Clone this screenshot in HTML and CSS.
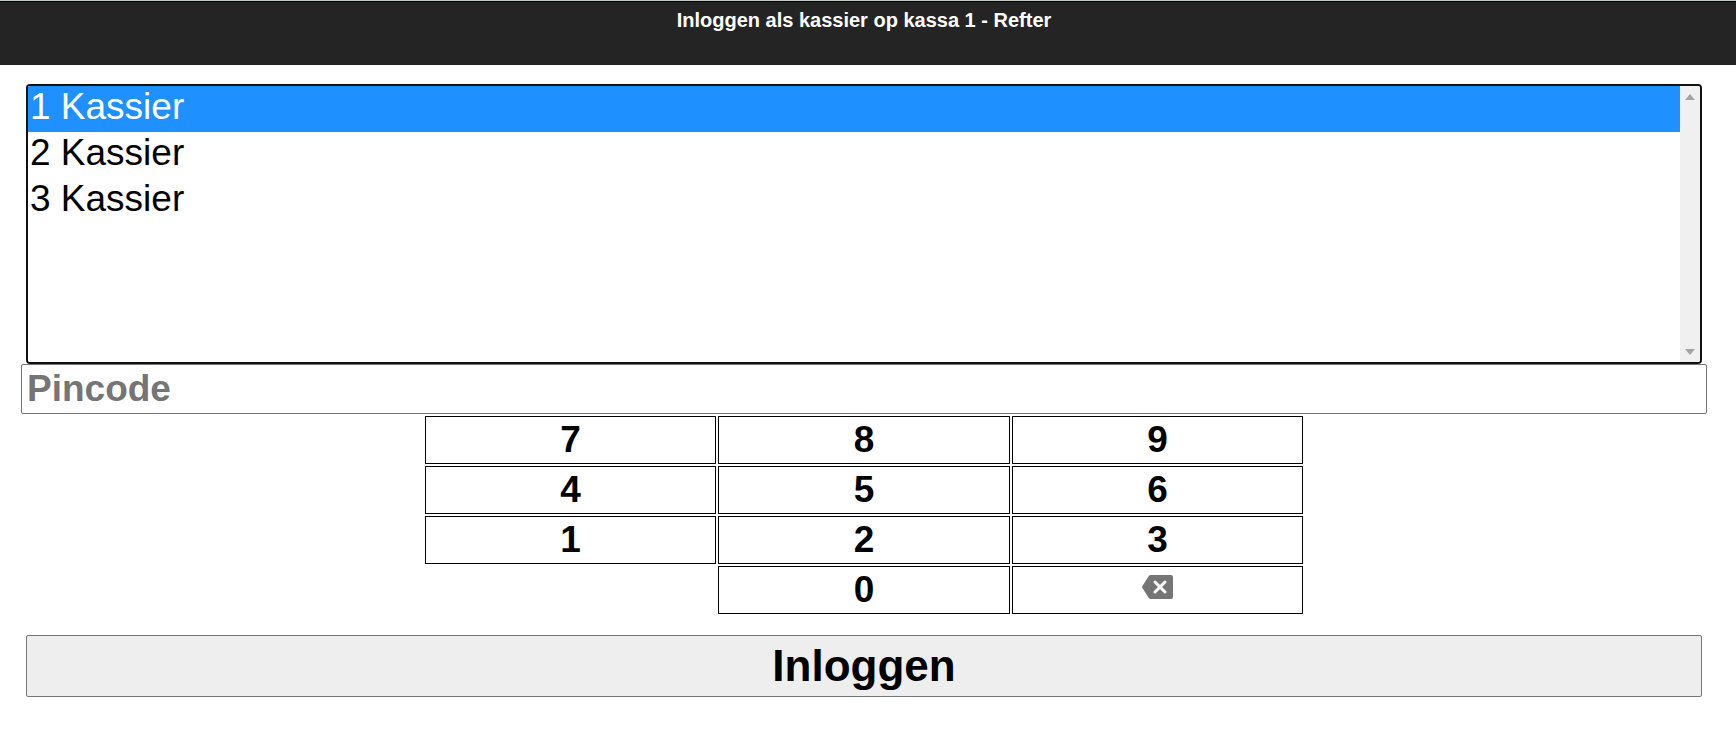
FILE: index.html
```html
<!DOCTYPE html>
<html lang="nl">
<head>
<meta charset="utf-8">
<meta name="viewport" content="width=device-width, initial-scale=1">
<title>Inloggen als kassier</title>
<link rel="stylesheet" href="styles.css">
</head>
<body>
<header class="topbar"><h1 class="topbar-title">Inloggen als kassier op kassa 1 - Refter</h1></header>
<main>
<form class="login">
  <div class="cashier-box">
    <select class="cashiers" size="6" aria-label="Kassier">
      <option selected>1 Kassier</option>
      <option>2 Kassier</option>
      <option>3 Kassier</option>
    </select>
    <div class="track" aria-hidden="true">
      <svg class="arrow" viewBox="0 0 10 6"><path d="M0 6 5 0l5 6z"/></svg>
      <svg class="arrow" viewBox="0 0 10 6"><path d="M0 0h10L5 6z"/></svg>
    </div>
  </div>
  <input class="pin" type="password" placeholder="Pincode" aria-label="Pincode">
  <div class="keypad">
    <button class="key" type="button">7</button>
    <button class="key" type="button">8</button>
    <button class="key" type="button">9</button>
    <button class="key" type="button">4</button>
    <button class="key" type="button">5</button>
    <button class="key" type="button">6</button>
    <button class="key" type="button">1</button>
    <button class="key" type="button">2</button>
    <button class="key" type="button">3</button>
    <button class="key key-zero" type="button">0</button>
    <button class="key key-erase" type="button" aria-label="Wissen">
      <svg class="erase-icon" viewBox="0 0 31 24"><path fill="#757575" d="M9 0H29a2 2 0 0 1 2 2v20a2 2 0 0 1-2 2H9Q7.500 24 6.800 23L.4 13Q-.2 12 .4 11L6.800 1Q7.500 0 9 0z"/><path d="M13 7l10 10M23 7L13 17" stroke="#fff" stroke-width="3" stroke-linecap="round"/></svg>
    </button>
  </div>
  <button class="submit" type="submit">Inloggen</button>
</form>
</main>
</body>
</html>
```
FILE: styles.css
```css
* { box-sizing: border-box; }
body {
  margin: 0;
  background: #fff;
  color: #000;
  font-family: Arial, "Liberation Sans", sans-serif;
}
.topbar {
  height: 65px;
  padding: 7px 8px 0 0;
  border-top: 1px solid #c3cbc4;
  box-shadow: inset 0 1px #000;
  background: #242424;
  color: #fff;
  text-align: center;
}
.topbar-title { margin: 0; font-size: 20px; line-height: 24px; }
.login {
  display: flex;
  flex-direction: column;
  margin: 19px 29px 0 21px;
}
.cashier-box {
  display: flex;
  height: 280px;
  margin: 0 5px;
  border: 2px solid #101010;
  border-radius: 4px;
  overflow: hidden;
}
.cashiers {
  flex: 1;
  min-width: 0;
  height: 100%;
  padding: 0;
  border: 0;
  border-radius: 0;
  outline: 0;
  background: #fff;
  color: #000;
  font: 37px Arial, "Liberation Sans", sans-serif;
  overflow: hidden;
}
.cashiers option { min-height: 46px; padding: 0 2px 2px; line-height: 44px; }
.cashiers option:checked {
  background: #1e90ff linear-gradient(#1e90ff, #1e90ff);
  color: #fff;
  -webkit-text-fill-color: #fff;
}
.track {
  display: flex;
  flex-direction: column;
  justify-content: space-between;
  align-items: center;
  width: 20px;
  padding: 8px 0 7px;
  background: #f0f0f0;
}
.arrow { width: 10px; height: 6px; fill: #a3a3a3; }
.pin {
  height: 50px;
  padding: 0 5px 1px;
  border: 1px solid #767676;
  border-radius: 2px;
  background: #fff;
  font: bold 37px Arial, "Liberation Sans", sans-serif;
}
.pin::placeholder { color: #757575; opacity: 1; }
.keypad {
  display: grid;
  grid-template-columns: repeat(3, 1fr);
  gap: 2px;
  align-self: center;
  width: calc(52% + 2px);
  margin: 2px 0 21px;
}
.key {
  display: flex;
  align-items: center;
  justify-content: center;
  height: 48px;
  padding: 0;
  border: 1px solid #000;
  background: #fff;
  color: #000;
  font: bold 37px Arial, "Liberation Sans", sans-serif;
}
.key-zero { grid-column: 2; }
.key-erase { padding-bottom: 6px; }
.erase-icon { width: 31px; height: 24px; }
.submit {
  height: 62px;
  margin: 0 5px;
  padding: 0;
  border: 1px solid #767676;
  border-radius: 2px;
  background: #eee;
  color: #000;
  font: bold 44px Arial, "Liberation Sans", sans-serif;
}
```
